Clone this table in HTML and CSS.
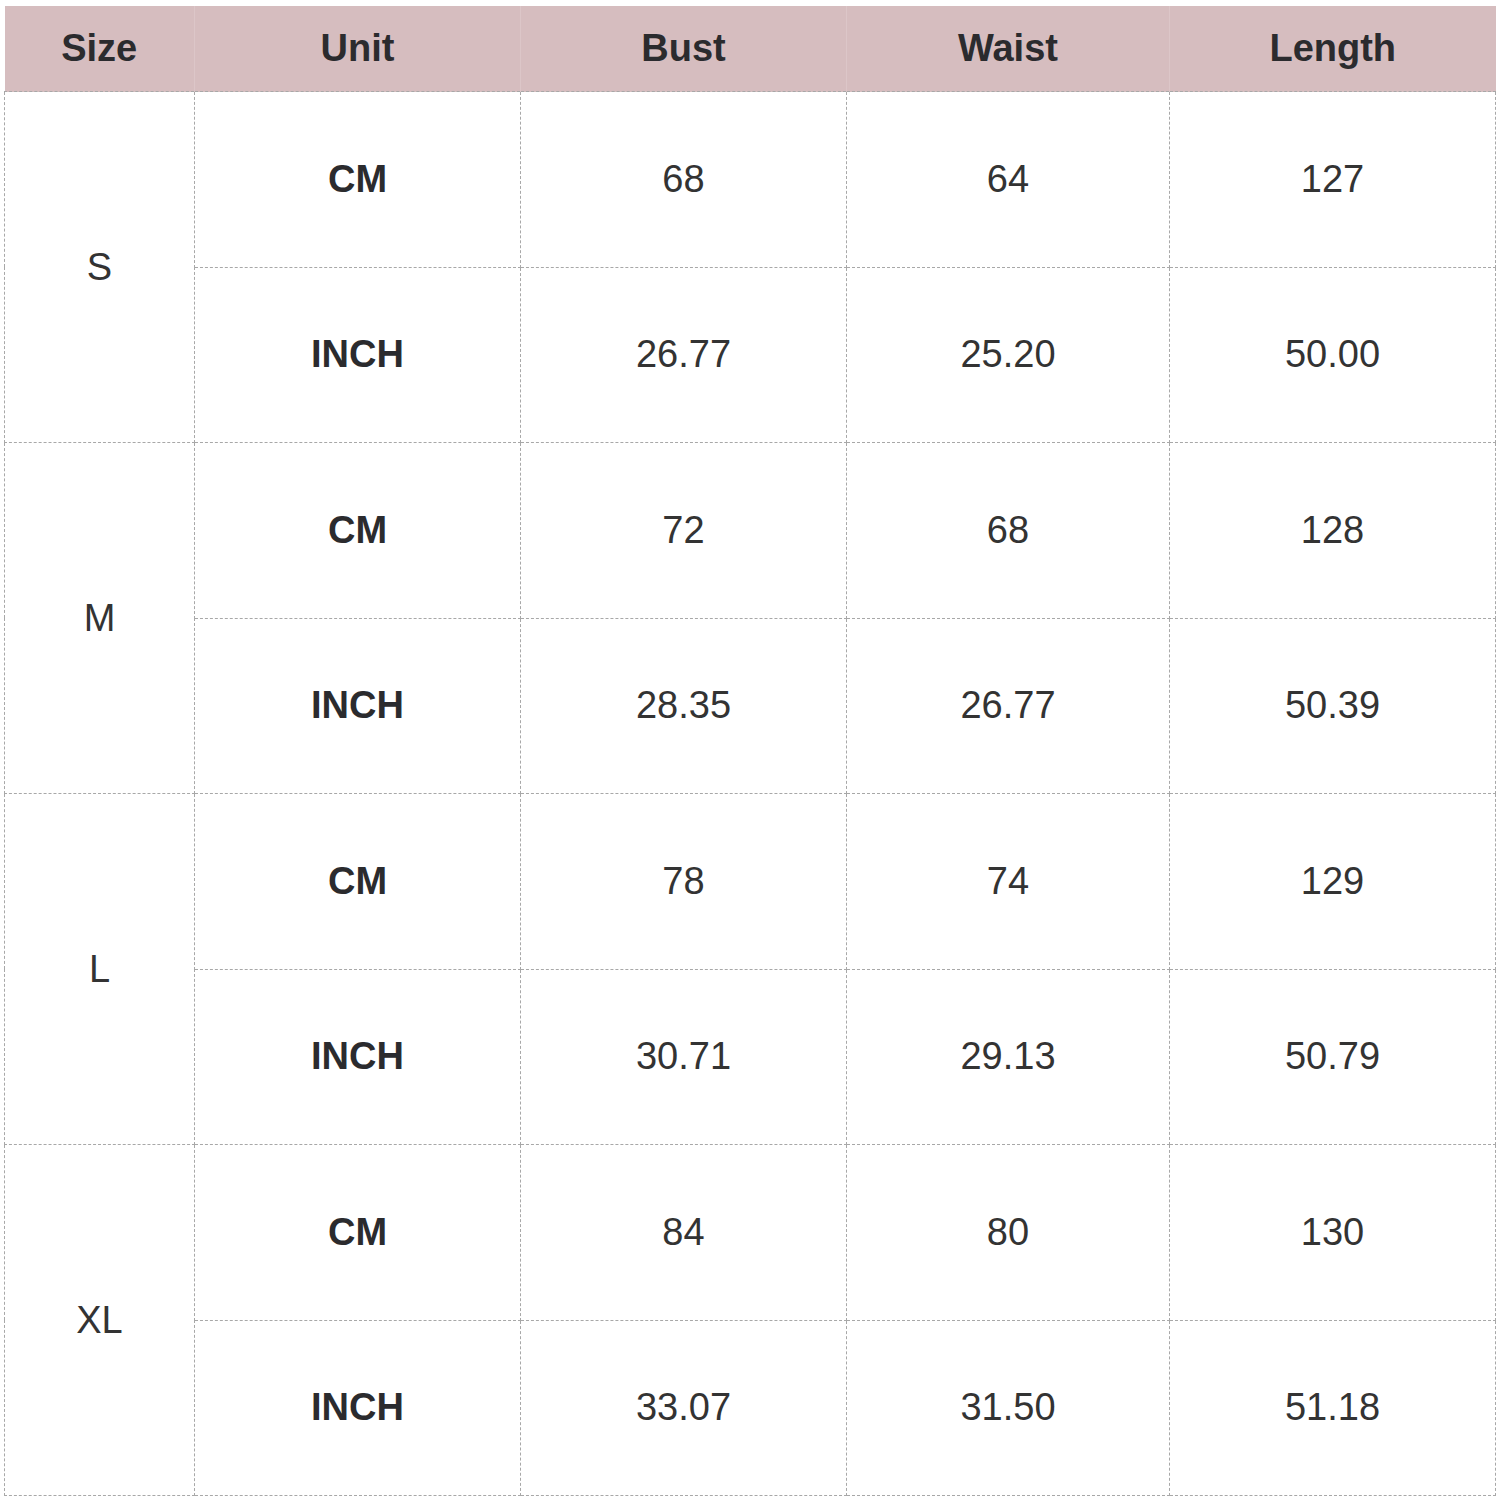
FILE: index.html
```html
<!DOCTYPE html>
<html>
<head>
<meta charset="utf-8">
<link rel="stylesheet" href="styles.css">
</head>
<body>
<div class="wrap">
<table class="size-table">
<colgroup>
<col class="c-size"><col class="c-unit"><col class="c-val"><col class="c-val2"><col class="c-val">
</colgroup>
<thead>
<tr><th>Size</th><th>Unit</th><th>Bust</th><th>Waist</th><th>Length</th></tr>
</thead>
<tbody>
<tr><td class="size" rowspan="2">S</td><td class="unit">CM</td><td>68</td><td>64</td><td>127</td></tr>
<tr><td class="unit">INCH</td><td>26.77</td><td>25.20</td><td>50.00</td></tr>
<tr><td class="size" rowspan="2">M</td><td class="unit">CM</td><td>72</td><td>68</td><td>128</td></tr>
<tr><td class="unit">INCH</td><td>28.35</td><td>26.77</td><td>50.39</td></tr>
<tr><td class="size" rowspan="2">L</td><td class="unit">CM</td><td>78</td><td>74</td><td>129</td></tr>
<tr><td class="unit">INCH</td><td>30.71</td><td>29.13</td><td>50.79</td></tr>
<tr><td class="size" rowspan="2">XL</td><td class="unit">CM</td><td>84</td><td>80</td><td>130</td></tr>
<tr><td class="unit">INCH</td><td>33.07</td><td>31.50</td><td>51.18</td></tr>
</tbody>
</table>
</div>
</body>
</html>
```
FILE: styles.css
```css
html, body {
  margin: 0;
  padding: 0;
  background: #ffffff;
}
.wrap {
  padding: 6px 4px 4px 4px;
}
.size-table {
  width: 1491px;
  border-collapse: collapse;
  table-layout: fixed;
  font-family: "Liberation Sans", Arial, sans-serif;
  font-size: 38px;
  color: #333333;
}
.c-size { width: 190px; }
.c-unit { width: 326px; }
.c-val { width: 326px; }
.c-val2 { width: 323px; }
.size-table th {
  background: #d6bdbf;
  color: #2b2b2e;
  font-weight: bold;
  height: 85px;
  padding: 0;
  text-align: center;
  border-left: 1px solid #dcc6c8;
  border-bottom: 1px dashed #a8a8a8;
}
.size-table th:first-child {
  border-left: none;
}
.size-table td {
  height: 174.5px;
  padding: 0;
  text-align: center;
  border: 1px dashed #a8a8a8;
}
.size-table td.unit {
  font-weight: bold;
  color: #2b2b2e;
}
.size-table td.size {
  color: #333333;
}
```
